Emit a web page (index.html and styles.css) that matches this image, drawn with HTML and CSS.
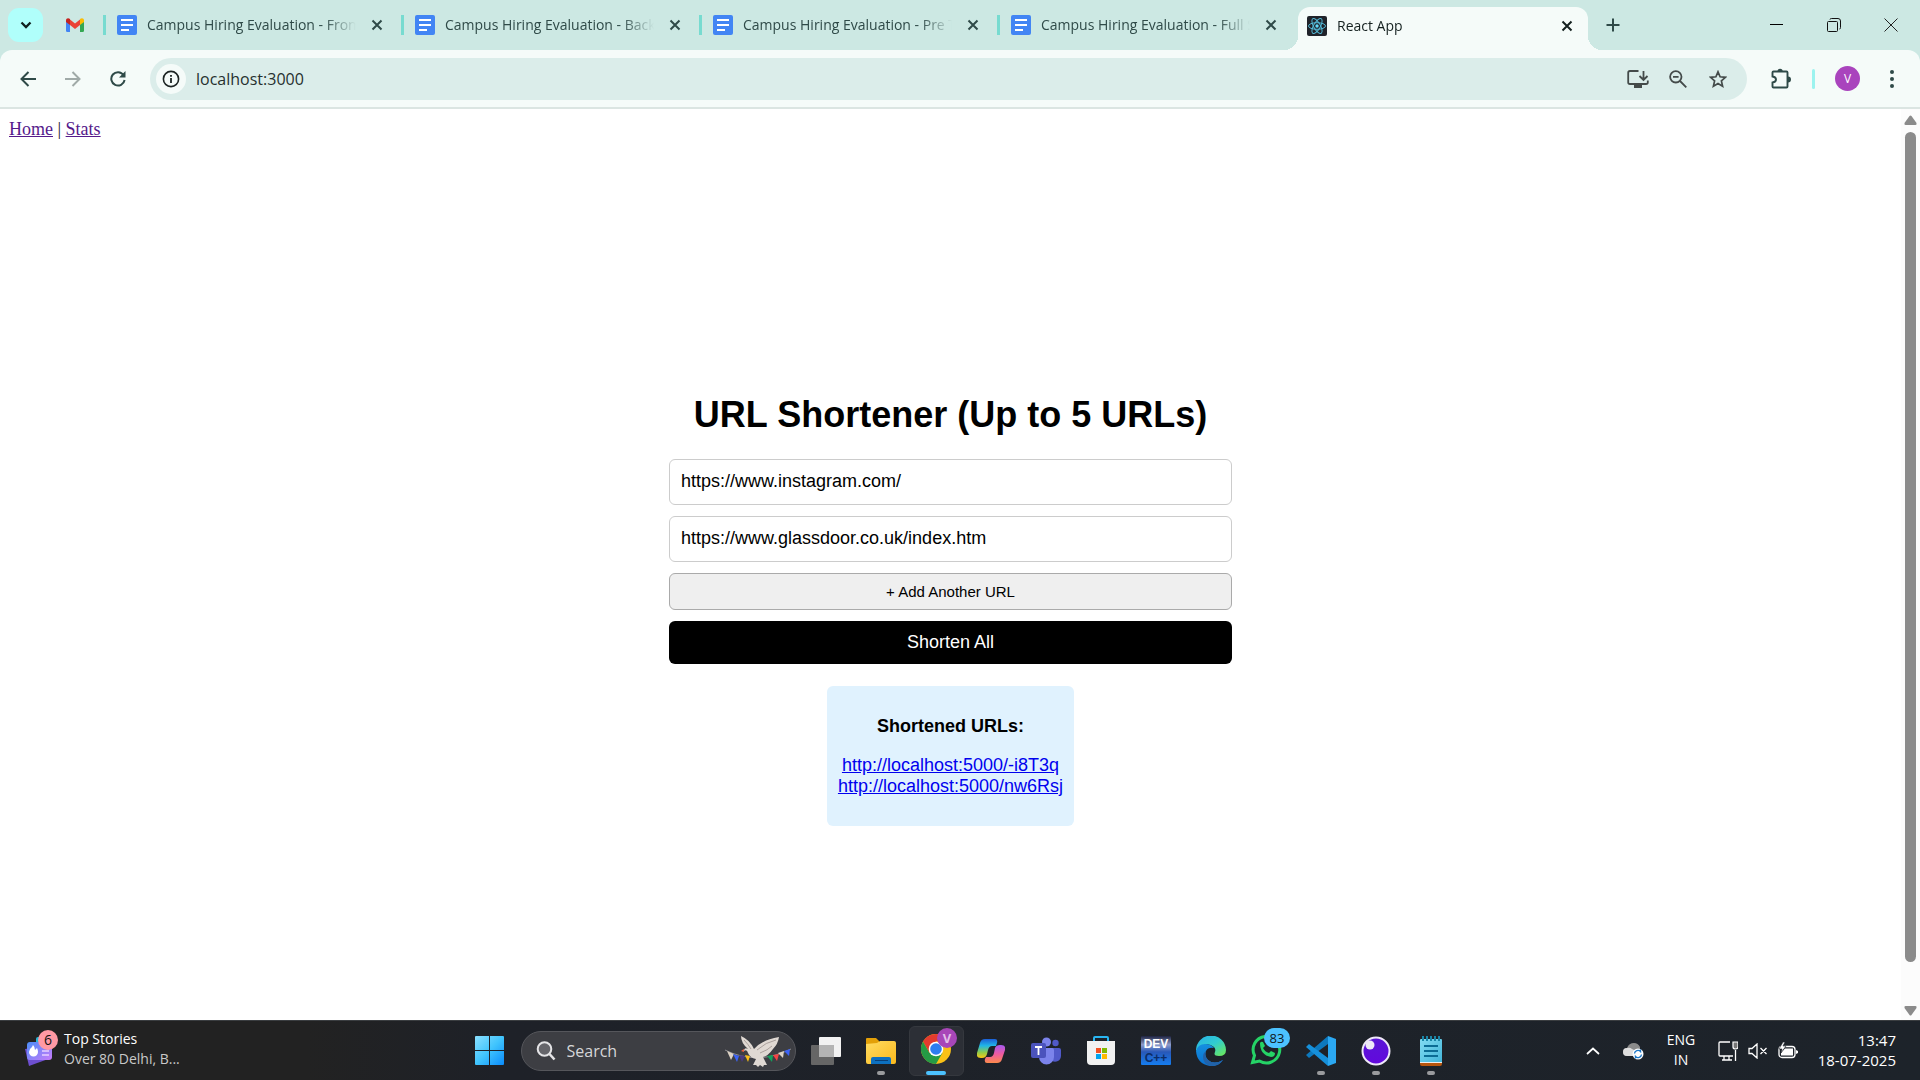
FILE: index.html
```html
<!DOCTYPE html>
<html lang="en">
<head>
<meta charset="utf-8">
<title>React App</title>
<link rel="stylesheet" href="styles.css">
</head>
<body>
<svg class="defs" aria-hidden="true">
  <defs>
    <symbol id="docs" viewBox="0 0 20 20"><rect width="20" height="20" rx="2" fill="#4285f4"/><path d="M4 5h12M4 10h12M4 15h8" stroke="#fff" stroke-width="2"/></symbol>
    <symbol id="close" viewBox="0 0 12 12"><path d="M1.5 1.5l9 9M10.5 1.5l-9 9" stroke="currentColor" stroke-width="2" fill="none"/></symbol>
    <linearGradient id="win" x1="0" y1="0" x2="1" y2="1"><stop offset="0" stop-color="#8be0ff"/><stop offset=".5" stop-color="#40c4fd"/><stop offset="1" stop-color="#0a8bfb"/></linearGradient>
    <linearGradient id="card" x1="0" y1="0" x2="1" y2="1"><stop offset="0" stop-color="#4b8df8"/><stop offset="1" stop-color="#c77bfa"/></linearGradient>
    <linearGradient id="folder" x1="0" y1="0" x2="1" y2="1"><stop offset="0" stop-color="#ffdc62"/><stop offset="1" stop-color="#fbb91c"/></linearGradient>
    <linearGradient id="copA" x1="0" y1="0" x2="0" y2="1"><stop offset="0" stop-color="#1c5fd8"/><stop offset=".35" stop-color="#20b5e8"/><stop offset=".7" stop-color="#8ecb4b"/><stop offset="1" stop-color="#fbc614"/></linearGradient>
    <linearGradient id="copB" x1="0" y1="0" x2="0" y2="1"><stop offset="0" stop-color="#a559f0"/><stop offset=".5" stop-color="#ef5aa0"/><stop offset="1" stop-color="#fc8a4c"/></linearGradient>
    <linearGradient id="edgeA" x1="0" y1="0" x2="1" y2="1"><stop offset="0" stop-color="#28aee8"/><stop offset=".5" stop-color="#31cdd0"/><stop offset="1" stop-color="#70ea50"/></linearGradient>
    <linearGradient id="edgeB" x1="0" y1="0" x2="0" y2="1"><stop offset="0" stop-color="#1590e0"/><stop offset="1" stop-color="#0a70cf"/></linearGradient>
    <linearGradient id="dev" x1="0" y1="0" x2="0" y2="1"><stop offset="0" stop-color="#1e2340"/><stop offset=".3" stop-color="#8d9ccb"/><stop offset=".55" stop-color="#2858b8"/><stop offset="1" stop-color="#157df0"/></linearGradient>
    <linearGradient id="note" x1="0" y1="0" x2="1" y2="1"><stop offset="0" stop-color="#82dcf2"/><stop offset="1" stop-color="#42b4d8"/></linearGradient>
    <linearGradient id="inso" x1="0" y1="0" x2="0" y2="1"><stop offset="0" stop-color="#5a16d6"/><stop offset="1" stop-color="#6208dd"/></linearGradient>
  </defs>
</svg>

<header class="browser">
  <div class="tabstrip">
    <button class="tab-search" aria-label="Search tabs"><svg width="12" height="8" viewBox="0 0 12 8"><path d="M1.5 1.5L6 6l4.500-4.500" fill="none" stroke="#10201e" stroke-width="2.300"/></svg></button>
    <button class="pinned" aria-label="Gmail"><svg width="18" height="14" viewBox="0 0 18 14"><path d="M0 2v10.500Q0 14 1.300 14H4V5z" fill="#4285f4"/><path d="M18 2v10.500Q18 14 16.700 14H14V5z" fill="#34a853"/><path d="M4 1.500l5 4 5-4V7l-5 4-5-4z" fill="#ea4335"/><path d="M0 2.300C0 .200 2.300-.600 4 1v6L0 4z" fill="#c5221f"/><path d="M18 2.300C18 .200 15.700-.600 14 1v6l4-3z" fill="#fbbc04"/></svg></button>
    <div class="tab"><svg class="fav"><use href="#docs"/></svg><span class="tab-title">Campus Hiring Evaluation - Frontend</span><button class="tab-close" aria-label="Close tab"><svg width="12" height="12"><use href="#close"/></svg></button></div>
    <div class="tab"><svg class="fav"><use href="#docs"/></svg><span class="tab-title">Campus Hiring Evaluation - Backend</span><button class="tab-close" aria-label="Close tab"><svg width="12" height="12"><use href="#close"/></svg></button></div>
    <div class="tab"><svg class="fav"><use href="#docs"/></svg><span class="tab-title">Campus Hiring Evaluation - Pre Test</span><button class="tab-close" aria-label="Close tab"><svg width="12" height="12"><use href="#close"/></svg></button></div>
    <div class="tab"><svg class="fav"><use href="#docs"/></svg><span class="tab-title">Campus Hiring Evaluation - Full Stack</span><button class="tab-close" aria-label="Close tab"><svg width="12" height="12"><use href="#close"/></svg></button></div>
    <div class="tab active">
      <svg class="fav" viewBox="0 0 20 20"><rect width="20" height="20" rx="2" fill="#20232a"/><g fill="none" stroke="#53b9d6" stroke-width="1"><ellipse cx="10" cy="10" rx="8.500" ry="3.300"/><ellipse cx="10" cy="10" rx="8.500" ry="3.300" transform="rotate(60 10 10)"/><ellipse cx="10" cy="10" rx="8.500" ry="3.300" transform="rotate(120 10 10)"/></g><circle cx="10" cy="10" r="1.700" fill="#61dafb"/></svg>
      <span class="tab-title">React App</span><button class="tab-close" aria-label="Close tab"><svg width="12" height="12"><use href="#close"/></svg></button>
    </div>
    <button class="new-tab" aria-label="New tab"><svg width="14" height="14" viewBox="0 0 14 14"><path d="M7 .500v13M.500 7h13" stroke="#2f4a48" stroke-width="2"/></svg></button>
    <div class="window-controls">
      <button aria-label="Minimise"><svg width="14" height="14" viewBox="0 0 14 14"><path d="M0 6.500h13" stroke="#000"/></svg></button>
      <button aria-label="Restore"><svg width="14" height="14" viewBox="0 0 14 14"><g fill="none" stroke="#111"><rect x=".500" y="3.500" width="10" height="10" rx="1"/><path d="M3 1.500Q3 .500 4.500.500H11Q13.500.500 13.500 3v6.500q0 1.500-1 1.500"/></g></svg></button>
      <button aria-label="Close"><svg width="14" height="14" viewBox="0 0 14 14"><path d="M.500.500l13 13M13.500.500l-13 13" stroke="#222"/></svg></button>
    </div>
  </div>

  <div class="toolbar">
    <button class="nav-button" aria-label="Back"><svg width="16" height="16" viewBox="0 0 16 16"><path d="M8.500 1L1.500 8l7 7M1.500 8H16" fill="none" stroke="#2f4a48" stroke-width="2"/></svg></button>
    <button class="nav-button" aria-label="Forward"><svg width="16" height="16" viewBox="0 0 16 16"><path d="M7.500 1l7 7-7 7M14.500 8H0" fill="none" stroke="#a0aaa8" stroke-width="2"/></svg></button>
    <button class="nav-button" aria-label="Reload"><svg width="16" height="16" viewBox="0 0 16 16"><path d="M13.500 4A6.700 6.700 0 1 0 14.600 9" fill="none" stroke="#2f4a48" stroke-width="2"/><path d="M15.500 0v6.500H9z" fill="#2f4a48"/></svg></button>
    <div class="omnibox">
      <button class="site-info" aria-label="Site information"><svg width="18" height="18" viewBox="0 0 18 18"><circle cx="9" cy="9" r="7.600" fill="none" stroke="#1c2423" stroke-width="1.600"/><path d="M9 8v5M9 5v1.700" stroke="#1c2423" stroke-width="1.800"/></svg></button>
      <input class="address" type="text" aria-label="Address" value="localhost:3000">
      <button class="omni-icon" aria-label="Install app"><svg width="22" height="18" viewBox="0 0 22 18"><path d="M11.500 1H3Q1.200 1 1.200 2.800v9.400Q1.200 14 3 14h16q1.800 0 1.800-1.800V10.500M16.500 1v8.500M12.500 6l4 4 4-4" fill="none" stroke="#444b4a" stroke-width="1.800"/><path d="M7 14h8v4H7z" fill="#444b4a"/></svg></button>
      <button class="omni-icon" aria-label="Zoom"><svg width="18" height="18" viewBox="0 0 18 18"><g fill="none" stroke="#444b4a" stroke-width="1.800"><circle cx="6.800" cy="6.800" r="5.700"/><path d="M11 11l6.300 6.300M4 6.800h5.600"/></g></svg></button>
      <button class="omni-icon" aria-label="Bookmark"><svg width="18" height="18" viewBox="0 0 18 18"><path d="M9 1.800l2.100 5 5.400.500-4.100 3.600 1.200 5.300L9 13.400l-4.600 2.800 1.200-5.300-4.100-3.600 5.400-.500z" fill="none" stroke="#444b4a" stroke-width="1.700"/></svg></button>
    </div>
    <button class="extensions" aria-label="Extensions"><svg width="22" height="22" viewBox="0 0 22 22"><path d="M3.500 3.500h13q1 0 1 1v14q0 1-1 1h-13q-1 0-1-1v-4q3.500-.500 3.500-3t-3.500-3v-4q0-1 1-1z" fill="none" stroke="#2f4a48" stroke-width="1.900"/><path d="M7.500 3.500a2.600 2.800 0 0 1 5.200 0zM18 8.500a3 3 0 0 1 0 6z" fill="#2f4a48"/></svg></button>
    <span class="divider"></span>
    <button class="profile" aria-label="Profile">V</button>
    <button class="menu" aria-label="Menu"><svg width="4" height="18" viewBox="0 0 4 18" fill="#2f4a48"><circle cx="2" cy="2" r="2"/><circle cx="2" cy="9" r="2"/><circle cx="2" cy="16" r="2"/></svg></button>
  </div>
</header>

<div class="viewport">
  <div class="page">
    <nav class="site-nav"><a href="#home">Home</a> | <a href="#stats">Stats</a></nav>
    <main class="shortener">
      <h1>URL Shortener (Up to 5 URLs)</h1>
      <form class="url-form">
        <input type="text" aria-label="URL 1" value="https://www.instagram.com/">
        <input type="text" aria-label="URL 2" value="https://www.glassdoor.co.uk/index.htm">
        <button type="button" class="add">+ Add Another URL</button>
        <button type="button" class="shorten">Shorten All</button>
      </form>
      <section class="result">
        <h2>Shortened URLs:</h2>
        <a href="#i8T3q">http://localhost:5000/-i8T3q</a>
        <a href="#nw6Rsj">http://localhost:5000/nw6Rsj</a>
      </section>
    </main>
  </div>
  <div class="scrollbar" aria-hidden="true">
    <svg width="13" height="10" viewBox="0 0 13 10"><path d="M5.500 1q1-1 2 0l5 7q.500 2-1 2h-10q-1.500 0-1-2z" fill="#8b8b8b"/></svg>
    <div class="track"><div class="thumb"></div></div>
    <svg width="13" height="10" viewBox="0 0 13 10"><path d="M5.500 9q1 1 2 0l5-7q.500-2-1-2h-10Q0 0 .500 2z" fill="#8b8b8b"/></svg>
  </div>
</div>

<footer class="taskbar">
  <button class="widgets">
    <svg class="stories" width="36" height="38" viewBox="0 0 36 38"><path d="M1 19l22-3 4 12-22 8z" fill="#6e4fd0"/><rect x="12" y="7" width="12" height="14" rx="2" fill="#28b8d8"/><rect x="3" y="12" width="25" height="18" rx="3" fill="url(#card)"/><path d="M9 15q2 2 2 5l2-2q1 2 1 4a4.500 4.500 0 0 1-9 0q0-3 3-5z" fill="#fff"/><path d="M18 21h7M18 25h7" stroke="#e8d0ff" stroke-width="1.500"/><circle cx="24" cy="10" r="10" fill="#ff99a4"/><text x="24" y="15" text-anchor="middle" font-size="14" fill="#111">6</text></svg>
    <span class="story"><span>Top Stories</span><span class="dim">Over 80 Delhi, B...</span></span>
  </button>

  <div class="apps">
    <button class="app" aria-label="Start"><svg width="29" height="29" viewBox="0 0 29 29"><path d="M0 1q0-1 1-1h13v14H0zM15 0h13q1 0 1 1v13H15zM0 15h14v14H1q-1 0-1-1zM15 15h14v13q0 1-1 1H15z" fill="url(#win)"/></svg></button>
    <label class="search">
      <svg width="20" height="20" viewBox="0 0 20 20"><circle cx="8.500" cy="8" r="6.800" fill="#65656a" stroke="#e4e4e6" stroke-width="2"/><path d="M13.500 13l5 5.500" stroke="#e4e4e6" stroke-width="2.600"/></svg>
      <input type="text" placeholder="Search" aria-label="Search">
      <svg width="68" height="34" viewBox="0 0 68 34"><path d="M1 16q32 16 66-1" fill="none" stroke="#8c8c90"/><path d="M3 17l7 3-3 6z" fill="#ddd2c4"/><path d="M9 20l6 2-2 6z" fill="#3d63f5"/><path d="M15 21l6 1-3 6z" fill="#4a3a80"/><path d="M21 21l5 1-2 6z" fill="#fbbd18"/><path d="M43 22l6-1-1 7z" fill="#12a25c"/><path d="M49 21l6-1-2 7z" fill="#f24343"/><path d="M54 19l6-2-1 7z" fill="#ddd2c4"/><path d="M60 17l6-2-1 7z" fill="#3d63f5"/><path d="M24 15Q17 9 17 2q9 4 13 13 8-9 25-12-1 7-6 12-5 7-10 8l4 8-3 0-1 2-3-2-2 2-2-2-3 0 3-6q-6-1-8-6-1-4-4-2 0-4 4-2z" fill="#e0d9d3"/><path d="M33 16q9-8 19-10M36 19q8-3 12-7M20 6q4 4 7 9" stroke="#aaa09c" fill="none"/><path d="M20 18l-3-1 3-2z" fill="#ef6040"/></svg>
    </label>
    <button class="app" aria-label="Task view"><svg width="30" height="30" viewBox="0 0 30 30"><rect x="0" y="9" width="23" height="20" rx="1" fill="#666"/><rect x="8" y="1" width="22" height="20" rx="1" fill="#f2f2f2"/><path d="M8 9h15v12H8z" fill="#b4b4b4"/></svg></button>
    <button class="app running" aria-label="File Explorer"><svg width="30" height="30" viewBox="0 0 30 30"><path d="M0 3q0-1 1-1h9l3 3v5H0z" fill="#e3a008"/><path d="M0 8l11-1 3-2h14q2 0 2 2v19q0 2-2 2H2q-2 0-2-2z" fill="url(#folder)"/><path d="M5 28v-5q0-2 2-2h16q2 0 2 2v5z" fill="#0d70c0"/><path d="M9 24.500h13" stroke="#083f78"/></svg></button>
    <button class="app focused" aria-label="Chrome"><svg width="36" height="38" viewBox="0 0 36 38"><circle cx="15" cy="21" r="15" fill="#fbc116"/><path d="M2 13.500A15 15 0 0 1 28 13.500H15L8.500 25z" fill="#e33b2e"/><path d="M2 13.500A15 15 0 0 0 15 36l6.500-11.200L8.500 25z" fill="#259b45"/><path d="M28 13.500H15v5z" fill="#fbc116"/><circle cx="15" cy="21" r="7.300" fill="#fff"/><circle cx="15" cy="21" r="5.800" fill="#2d7df0"/><circle cx="26" cy="10" r="10" fill="#a846b8"/><text x="26" y="15" text-anchor="middle" font-size="13" font-weight="700" fill="#e3bfe8">V</text></svg></button>
    <button class="app" aria-label="Copilot"><svg width="28" height="26" viewBox="0 0 28 26"><path d="M8 1h10q3 0 2 4l-1 3h-4q-3 0-4 4l-1 4q-1 4-5 4H4q-5 0-4-5L3 5q1-4 5-4z" fill="url(#copA)"/><path d="M20 25H10q-3 0-2-4l1-2h4q3 0 4-4l1-5q1-3 5-3h1q5 0 4 5l-3 9q-1 4-5 4z" fill="url(#copB)"/></svg></button>
    <button class="app" aria-label="Teams"><svg width="30" height="28" viewBox="0 0 30 28"><circle cx="15.500" cy="5" r="4.500" fill="#7b83eb"/><circle cx="24.500" cy="6" r="3.200" fill="#5059c9"/><path d="M20 11h8q2 0 2 2v6a6 6 0 0 1-9 5z" fill="#5059c9"/><path d="M9 11h12q2 0 2 2v7a7.500 7.500 0 0 1-15 0v-8z" fill="#7b83eb"/><rect y="6" width="15" height="15" rx="2" fill="#4b53bc"/><path d="M4 10h7M7.500 10v8" stroke="#fff" stroke-width="1.800"/></svg></button>
    <button class="app" aria-label="Microsoft Store"><svg width="30" height="30" viewBox="0 0 30 30"><path d="M8 6V2q0-1 1-1h12q1 0 1 1v4" fill="none" stroke="#29b6f2" stroke-width="2"/><path d="M1 5h28v20q0 4-4 4H5q-4 0-4-4z" fill="#f1f1f1"/><path d="M10 12h5v5h-5z" fill="#f25022"/><path d="M16 12h5v5h-5z" fill="#7fba00"/><path d="M10 18h5v5h-5z" fill="#00a4ef"/><path d="M16 18h5v5h-5z" fill="#ffb900"/></svg></button>
    <button class="app" aria-label="Dev-C++"><svg class="dev-icon" width="30" height="30" viewBox="0 0 30 30"><rect width="30" height="29" rx="1" fill="url(#dev)"/><text x="15" y="12" text-anchor="middle" fill="#fff">DEV</text><text x="15" y="26" text-anchor="middle" fill="#0c2c66">C++</text></svg></button>
    <button class="app" aria-label="Edge"><svg width="30" height="30" viewBox="0 0 30 30"><path d="M0 15A15 15 0 0 1 30 14q0 6-7 6-6 0-4-4 1-3-1-5-6-5-12-1Q2 12 0 15z" fill="url(#edgeA)"/><path d="M0 15q2-7 9-7 6 0 9 4-6-1-8 3-2 5 2 9 6 5 15 0-5 7-13 6Q1 28 0 15z" fill="url(#edgeB)"/><path d="M10 15q-2 5 2 9 6 5 15 0-4 6-12 6-8-2-8-9 0-4 3-6z" fill="#2262a8"/></svg></button>
    <button class="app" aria-label="WhatsApp"><svg class="wide-icon" width="40" height="38" viewBox="0 0 40 38"><path d="M2.500 34.500l2-7A13.300 13.300 0 1 1 9.500 33z" fill="none" stroke="#25d366" stroke-width="3"/><path d="M10 15q1-2 3-1l2 4-2 2q2 4 6 5l2-2 4 2q0 4-4 4-11-2-11-14z" fill="#25d366"/><rect x="14" y="0" width="26" height="20" rx="10" fill="#4cc2ff"/><text x="27" y="15" text-anchor="middle" font-size="13" fill="#10181c">83</text></svg></button>
    <button class="app running" aria-label="Visual Studio Code"><svg width="30" height="30" viewBox="0 0 30 30"><path d="M22 0v8L3 22l-3-3z" fill="#0d78bd"/><path d="M22 30v-8L3 8l-3 3z" fill="#1690db"/><path d="M22 0l8 3v24l-8 3z" fill="#2ba8f2"/></svg></button>
    <button class="app running" aria-label="Insomnia"><svg width="30" height="30" viewBox="0 0 30 30"><circle cx="15" cy="15" r="13.500" fill="url(#inso)" stroke="#eee8f8" stroke-width="2"/><circle cx="9" cy="9" r="4.500" fill="#eee8f8"/></svg></button>
    <button class="app running" aria-label="Notepad"><svg width="24" height="30" viewBox="0 0 24 30"><rect x="1" y="3" width="22" height="24" rx="1" fill="url(#note)"/><path d="M1 26h22v1H1z" fill="#eee"/><path d="M1 27h22v1q0 2-2 2H3q-2 0-2-2z" fill="#b8560e"/><path d="M4 0v5M8 0v5M12 0v5M16 0v5M20 0v5" stroke="#1a86a8" stroke-width="2"/><path d="M5 10h14M5 15h14M5 20h14" stroke="#0c6c94" stroke-width="1.800"/></svg></button>
  </div>

  <div class="tray">
    <button aria-label="Hidden icons"><svg width="14" height="8" viewBox="0 0 14 8"><path d="M1 7l6-5.500L13 7" fill="none" stroke="#fff" stroke-width="1.700"/></svg></button>
    <button aria-label="OneDrive"><svg width="21" height="18" viewBox="0 0 21 18"><path d="M4 14a4 4 0 0 1 0-8q2-5 7-5 4 0 6 4v9z" fill="#8b8b8b"/><path d="M4 14a4 4 0 0 1 0-8q3-1 5 1l4 2v5z" fill="#dedede"/><circle cx="15" cy="12" r="5.500" fill="#fff"/><path d="M11.500 11.500a3.500 3.500 0 0 1 6-2V7.500M18.500 12.500a3.500 3.500 0 0 1-6 2v2" fill="none" stroke="#1976c8" stroke-width="1.400"/></svg></button>
    <button class="lang"><span>ENG</span><span>IN</span></button>
    <button class="status" aria-label="Network"><svg width="20" height="20" viewBox="0 0 20 20"><path d="M12 1H2Q1 1 1 2v12q0 1 1 1h13M6 15v4M11 15v4M4 19h10M17.500 9v11" fill="none" stroke="#fff" stroke-width="1.300"/><path d="M15 1h5v5q0 2-2.500 2T15 6z" fill="#777" stroke="#fff" stroke-width="1.200"/></svg></button>
    <button class="status" aria-label="Muted"><svg width="20" height="16" viewBox="0 0 20 16"><path d="M1 5.500h3L9 1v14l-5-4.500H1zM12.500 5l6 6M18.500 5l-6 6" fill="none" stroke="#fff" stroke-width="1.300"/></svg></button>
    <button class="status" aria-label="Battery"><svg width="20" height="18" viewBox="0 0 20 18"><rect x="1" y="4.500" width="16" height="11" rx="3" fill="none" stroke="#fff" stroke-width="1.300"/><path d="M7 6.500h8v7H3v-3z" fill="#fff"/><path d="M18 8v4l2-1V9z" fill="#fff"/><path d="M5 0L1 7h3l-1 4 5-7H5l2-4z" fill="#fff" stroke="#1d2128" stroke-width=".600"/></svg></button>
    <button class="clock"><span>13:47</span><span>18-07-2025</span></button>
  </div>
</footer>
</body>
</html>
```

FILE: styles.css
```css
* { box-sizing: border-box; }

html, body { height: 100%; }

body {
  margin: 0;
  display: flex;
  flex-direction: column;
  background: #fff;
  font-family: "Open Sans", "Noto Sans", sans-serif;
  overflow: hidden;
}

svg { display: block; flex: none; }

button {
  margin: 0;
  padding: 0;
  border: 0;
  background: none;
  color: inherit;
  font: inherit;
}

.defs { position: absolute; width: 0; height: 0; }

/* Browser frame */
.browser { flex: none; background: #cce8e3; }

.tabstrip {
  display: flex;
  align-items: center;
  height: 50px;
  padding-left: 8px;
}

.tab-search {
  display: grid;
  place-items: center;
  flex: none;
  width: 35px;
  height: 34px;
  border-radius: 11px;
  background: #b0fffb;
}

.pinned {
  display: grid;
  place-items: center;
  flex: none;
  width: 60px;
  height: 34px;
  padding-left: 4px;
}

.tab {
  display: flex;
  align-items: center;
  flex: 0 1 298px;
  min-width: 0;
  height: 20px;
  padding: 0 18px 0 11px;
  border-left: 3px solid #77dbd0;
  color: #2f4a48;
  font-size: 14px;
  line-height: 20px;
}

.fav { width: 20px; height: 20px; margin-right: 10px; }

.tab-title {
  flex: 1;
  min-width: 0;
  height: 20px;
  overflow: hidden;
  white-space: nowrap;
  mask-image: linear-gradient(to left, transparent, #000 32px);
}

.tab-close { flex: none; margin-left: 15px; }

.tab.active {
  position: relative;
  align-self: flex-end;
  flex-basis: 290px;
  height: 43px;
  margin-left: 3px;
  padding: 0 15px 6px 9px;
  border: 0;
  border-radius: 12px 12px 0 0;
  background: #f5fbf9;
  color: #14201f;
}

.tab.active::before,
.tab.active::after {
  content: "";
  position: absolute;
  bottom: 0;
  width: 14px;
  height: 14px;
}

.tab.active::before {
  right: 100%;
  background: radial-gradient(circle at 0 0, transparent 14px, #f5fbf9 14px);
}

.tab.active::after {
  left: 100%;
  background: radial-gradient(circle at 100% 0, transparent 14px, #f5fbf9 14px);
}

.new-tab {
  display: grid;
  place-items: center;
  flex: none;
  width: 34px;
  height: 34px;
  margin-left: 8px;
}

.window-controls { display: flex; margin-left: auto; padding-right: 1px; }

.window-controls button {
  display: grid;
  place-items: center;
  width: 57px;
  height: 48px;
}

.toolbar {
  display: flex;
  align-items: center;
  height: 59px;
  padding: 0 5px;
  border-bottom: 2px solid #dbe5e2;
  border-radius: 12px 12px 0 0;
  background: #f5fbf9;
}

.nav-button {
  display: grid;
  place-items: center;
  flex: none;
  width: 45px;
  height: 40px;
}

.omnibox {
  display: flex;
  align-items: center;
  flex: 1;
  min-width: 0;
  height: 42px;
  margin: 1px 0 0 10px;
  padding: 0 9px 0 6px;
  border-radius: 21px;
  background: #dbedea;
}

.site-info {
  display: grid;
  place-items: center;
  flex: none;
  width: 30px;
  height: 30px;
  border-radius: 50%;
  background: #f5fbf9;
}

.address {
  flex: 1;
  min-width: 0;
  height: 30px;
  padding: 0 10px;
  border: 0;
  background: none;
  color: #26302f;
  font: 16px "Open Sans", "Noto Sans", sans-serif;
}

.omni-icon {
  display: grid;
  place-items: center;
  flex: none;
  width: 40px;
  height: 40px;
}

.extensions { margin-left: 23px; }

.divider {
  width: 3px;
  height: 20px;
  margin: 0 20px 0 20px;
  border-radius: 2px;
  background: #9cf3ef;
}

.profile {
  flex: none;
  width: 25px;
  height: 25px;
  border-radius: 50%;
  background: #a944bd;
  color: #fff;
  font-size: 12px;
  line-height: 25px;
}

.menu { margin: 0 21px 0 30px; }

/* Web page */
.viewport { display: flex; flex: 1; min-height: 0; }

.page {
  display: flex;
  flex-direction: column;
  flex: 1;
  min-width: 0;
  padding-top: 10px;
}

.site-nav {
  padding-left: 9px;
  color: #222;
  font: 18px/21px "Liberation Serif", "Times New Roman", serif;
}

.site-nav a { color: #551a8b; }

.shortener {
  display: flex;
  flex-direction: column;
  align-items: center;
  justify-content: center;
  flex: 1;
  padding-top: 36px;
  font: 18px/21px "Liberation Sans", Arial, sans-serif;
}

.shortener h1 {
  margin: 24px 0;
  font-size: 36px;
  line-height: 41px;
}

.url-form {
  display: flex;
  flex-direction: column;
  gap: 11px;
  width: 563px;
  max-width: 100%;
}

.url-form input {
  height: 46px;
  padding: 0 11px 1px;
  border: 1px solid #ccc;
  border-radius: 6px;
  background: #fff;
  color: #000;
  font: inherit;
}

.add {
  padding: 9px;
  border: 1px solid #aaa;
  border-radius: 6px;
  background: #efefef;
  font-size: 15px;
  line-height: 17px;
}

.shorten {
  padding: 11px;
  border-radius: 6px;
  background: #000;
  color: #fff;
}

.result {
  display: flex;
  flex-direction: column;
  align-items: center;
  margin-top: 22px;
  padding: 30px 11px 29px;
  border-radius: 6px;
  background: #e0f2fe;
}

.result h2 {
  margin: 0 0 18px;
  font-size: 18px;
  line-height: 21px;
}

.result a { color: #00e; }

.scrollbar {
  display: flex;
  flex-direction: column;
  align-items: center;
  flex: none;
  width: 19px;
  padding: 6px 0 4px;
  background: #fcfcfc;
}

.track { flex: 1; width: 11px; padding: 7px 0 0; }

.thumb {
  height: 95%;
  border-radius: 6px;
  background: #8b8b8b;
}

/* Taskbar */
.taskbar {
  display: grid;
  grid-template-columns: 1fr auto 1fr;
  align-items: center;
  flex: none;
  height: 60px;
  border-top: 1px solid #3a3d40;
  background: linear-gradient(to right, #222 16%, #1e2128 26%, #1d232a);
  color: #fff;
  font-size: 14px;
  line-height: 20px;
}

.widgets {
  display: flex;
  align-items: center;
  gap: 4px;
  padding: 0 0 3px 24px;
  text-align: left;
}

.story, .lang, .clock { display: flex; flex-direction: column; }

.dim { color: #c9c9c9; }

.apps { display: flex; align-items: center; }

.app {
  position: relative;
  display: grid;
  place-items: center;
  flex: none;
  width: 55px;
  height: 50px;
}

.focused {
  border: 1px solid #35383e;
  border-radius: 6px;
  background: #2c2f36;
}

.focused svg { margin: -8px 0 0 5px; }

.wide-icon { margin: -8px 0 0 8px; }

.dev-icon { font: 700 12px "Liberation Sans", Arial, sans-serif; }

.running::after,
.focused::after {
  content: "";
  position: absolute;
  bottom: 1px;
  left: 50%;
  width: 8px;
  height: 4px;
  margin-left: -4px;
  border-radius: 2px;
  background: #9a9b9e;
}

.focused::after {
  bottom: 0;
  width: 20px;
  margin-left: -10px;
  background: #4cc2ff;
}

.search {
  display: flex;
  align-items: center;
  flex: none;
  width: 275px;
  height: 40px;
  margin: 0 3px 0 4px;
  padding: 0 3px 0 14px;
  border: 1px solid #55565b;
  border-radius: 20px;
  background: #3d3e43;
}

.search input {
  flex: 1;
  min-width: 0;
  padding: 0 11px;
  border: 0;
  background: none;
  color: #fff;
  font: 16px "Open Sans", "Noto Sans", sans-serif;
}

.search input::placeholder { color: #d6d6d8; opacity: 1; }

.tray {
  display: flex;
  align-items: center;
  justify-content: flex-end;
  padding-right: 24px;
}

.tray button {
  display: flex;
  align-items: center;
  justify-content: center;
  flex: none;
  width: 40px;
}

.tray .lang { width: 56px; margin-right: 4px; padding-bottom: 2px; }

.tray .status { width: 30px; }

.tray .clock {
  align-items: flex-end;
  width: 93px;
  padding-bottom: 2px;
  font-size: 15px;
}
```
